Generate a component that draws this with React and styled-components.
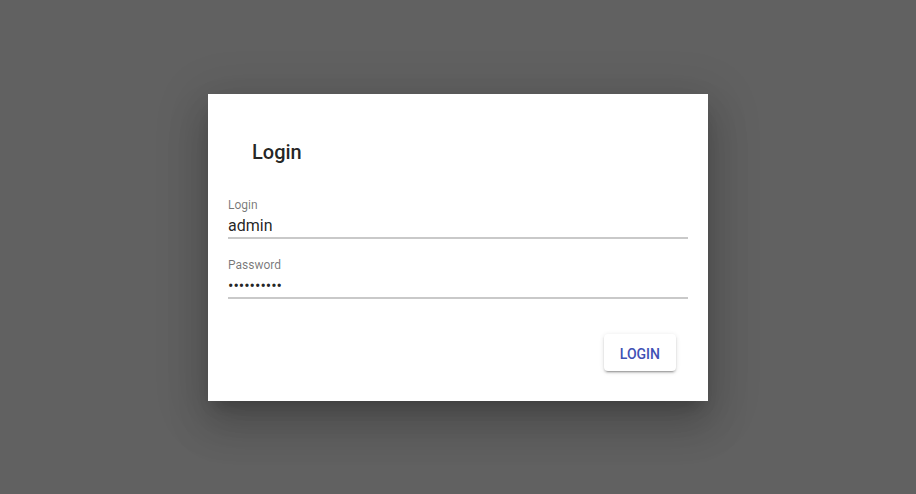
import React from "react";
import styled, { createGlobalStyle } from "styled-components";

const Global = createGlobalStyle`
  html, body { margin: 0; padding: 0; }
  body {
    background: #616161;
    font-family: Roboto, "Liberation Sans", sans-serif;
    -webkit-font-smoothing: antialiased;
  }
`;

const Page = styled.div`
  min-height: 100vh;
  box-sizing: border-box;
  padding-top: 94px;
  display: flex;
  justify-content: center;
  align-items: flex-start;
`;

const Dialog = styled.form`
  width: 500px;
  box-sizing: border-box;
  padding: 20px;
  background: #fff;
  display: flex;
  flex-direction: column;
  box-shadow: 0px 11px 15px -7px rgba(0, 0, 0, 0.2),
    0px 24px 38px 3px rgba(0, 0, 0, 0.14),
    0px 9px 46px 8px rgba(0, 0, 0, 0.12);
`;

const Title = styled.h2`
  margin: 0;
  padding: 26px 24px 0;
  font-size: 20px;
  line-height: 24px;
  font-weight: 500;
  color: rgba(0, 0, 0, 0.87);
`;

const Fields = styled.div`
  margin-top: 34px;
  display: flex;
  flex-direction: column;
  gap: 19px;
`;

const Field = styled.label`
  display: flex;
  flex-direction: column;
`;

const Label = styled.span`
  font-size: 12px;
  line-height: 14px;
  color: rgba(0, 0, 0, 0.54);
`;

const Input = styled.input`
  margin-top: 4px;
  border: none;
  border-bottom: 2px solid #c9c9c9;
  outline: none;
  padding: 0 0 2px;
  background: transparent;
  font-family: Roboto, "Liberation Sans", sans-serif;
  font-size: 16px;
  line-height: 19px;
  height: 23px;
  box-sizing: border-box;
  color: rgba(0, 0, 0, 0.87);
`;

const Actions = styled.div`
  margin-top: 35px;
  margin-bottom: 10px;
  padding-right: 12px;
  display: flex;
  justify-content: flex-end;
`;

const Button = styled.button`
  height: 37px;
  min-width: 64px;
  padding: 2px 16px 0;
  border: none;
  border-radius: 4px;
  background: #fff;
  color: #3f51b5;
  font-family: Roboto, "Liberation Sans", sans-serif;
  font-size: 14px;
  font-weight: 500;
  letter-spacing: 0;
  text-transform: uppercase;
  cursor: pointer;
  box-shadow: 0px 3px 1px -2px rgba(0, 0, 0, 0.2),
    0px 2px 2px 0px rgba(0, 0, 0, 0.14),
    0px 1px 5px 0px rgba(0, 0, 0, 0.12);
`;

export default function App() {
  return (
    <>
      <Global />
      <Page>
        <Dialog onSubmit={(e) => e.preventDefault()}>
          <Title>Login</Title>
          <Fields>
            <Field>
              <Label>Login</Label>
              <Input type="text" defaultValue="admin" readOnly />
            </Field>
            <Field>
              <Label>Password</Label>
              <Input type="password" defaultValue="adminadmin" readOnly />
            </Field>
          </Fields>
          <Actions>
            <Button type="submit">Login</Button>
          </Actions>
        </Dialog>
      </Page>
    </>
  );
}
